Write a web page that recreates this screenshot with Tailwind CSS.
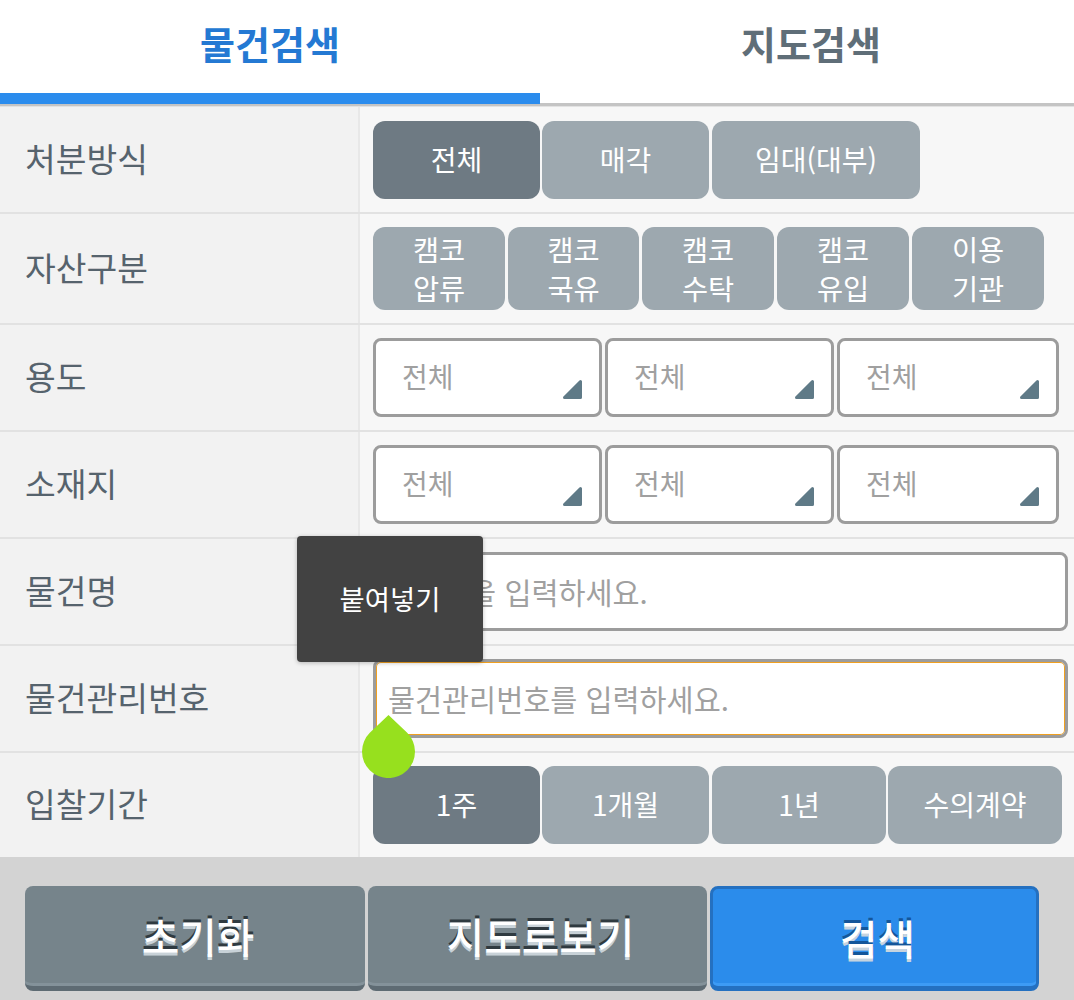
<!DOCTYPE html>
<html lang="ko">
<head>
<meta charset="UTF-8">
<meta name="viewport" content="width=device-width, initial-scale=1.0">
<title>물건검색</title>
<script src="https://cdn.jsdelivr.net/npm/@tailwindcss/browser@4"></script>
</head>
<body class="bg-[#d3d3d3] font-['Noto_Sans_CJK_KR','Noto_Sans',sans-serif] overflow-hidden">
<div class="relative w-[1074px] h-[1000px]">

  <!-- Tabs -->
  <div class="flex h-[106px] bg-white border-b-[3px] border-[#c4c4c4]">
    <div class="w-[540px] h-[104px] border-b-[11px] border-[#2b8ced] pb-[8px] flex items-center justify-center text-[38px] font-bold text-[#2479d3]">물건검색</div>
    <div class="flex-1 h-[103px] pb-[19px] pl-[8px] flex items-center justify-center text-[38px] font-bold text-[#5f6e78]">지도검색</div>
  </div>

  <!-- 처분방식 -->
  <div class="flex h-[108px] bg-[#f7f7f7] border-t border-b-2 border-[#e2e2e2]">
    <div class="w-[360px] bg-[#f2f2f2] border-r-2 border-[#e8e8e8] pl-[25px] pb-[3px] flex items-center text-[33.4px] text-[#56636d]">처분방식</div>
    <div class="flex pl-[13px] pt-[14px] gap-[2px] text-[28px] text-white">
      <div class="w-[167px] h-[78px] pb-[3px] rounded-[12px] bg-[#6e7a83] flex items-center justify-center">전체</div>
      <div class="w-[167px] h-[78px] pb-[3px] rounded-[12px] bg-[#9da8af] flex items-center justify-center">매각</div>
      <div class="w-[208px] h-[78px] pb-[3px] ml-px rounded-[12px] bg-[#9da8af] flex items-center justify-center">임대(대부)</div>
    </div>
  </div>

  <!-- 자산구분 -->
  <div class="flex h-[111px] bg-[#f7f7f7] border-b-2 border-[#e2e2e2]">
    <div class="w-[360px] bg-[#f2f2f2] border-r-2 border-[#e8e8e8] pl-[25px] pb-[3px] flex items-center text-[33.4px] text-[#56636d]">자산구분</div>
    <div class="flex pl-[13px] pt-[13px] gap-[3px] text-[28.4px] leading-[39px] text-white text-center">
      <div class="w-[132px] h-[83px] pb-px rounded-[12px] bg-[#9da8af] flex items-center justify-center">캠코<br>압류</div>
      <div class="w-[131px] h-[83px] pb-px rounded-[12px] bg-[#9da8af] flex items-center justify-center">캠코<br>국유</div>
      <div class="w-[132px] h-[83px] pb-px rounded-[12px] bg-[#9da8af] flex items-center justify-center">캠코<br>수탁</div>
      <div class="w-[132px] h-[83px] pb-px rounded-[12px] bg-[#9da8af] flex items-center justify-center">캠코<br>유입</div>
      <div class="w-[132px] h-[83px] pb-px rounded-[12px] bg-[#9da8af] flex items-center justify-center">이용<br>기관</div>
    </div>
  </div>

  <!-- 용도 -->
  <div class="flex h-[107px] bg-[#f7f7f7] border-b-2 border-[#e2e2e2]">
    <div class="w-[360px] bg-[#f2f2f2] border-r-2 border-[#e8e8e8] pl-[25px] pb-[3px] flex items-center text-[33.4px] text-[#56636d]">용도</div>
    <div class="flex pl-[13px] pt-[13px] gap-[3px] text-[28px] text-[#a0a0a0]">
      <div class="relative w-[229px] h-[79px] rounded-[8px] border-[3px] border-[#9c9c9c] bg-white pl-[26px] pb-[3px] flex items-center">전체
        <svg class="absolute right-[16px] bottom-[14px]" width="21" height="21" viewBox="0 0 21 21"><path d="M18.5 2.5 V18.5 H2.5 Z" fill="#5f7a87" stroke="#5f7a87" stroke-width="3" stroke-linejoin="round"/></svg>
      </div>
      <div class="relative w-[229px] h-[79px] rounded-[8px] border-[3px] border-[#9c9c9c] bg-white pl-[26px] pb-[3px] flex items-center">전체
        <svg class="absolute right-[16px] bottom-[14px]" width="21" height="21" viewBox="0 0 21 21"><path d="M18.5 2.5 V18.5 H2.5 Z" fill="#5f7a87" stroke="#5f7a87" stroke-width="3" stroke-linejoin="round"/></svg>
      </div>
      <div class="relative w-[222px] h-[79px] rounded-[8px] border-[3px] border-[#9c9c9c] bg-white pl-[26px] pb-[3px] flex items-center">전체
        <svg class="absolute right-[16px] bottom-[14px]" width="21" height="21" viewBox="0 0 21 21"><path d="M18.5 2.5 V18.5 H2.5 Z" fill="#5f7a87" stroke="#5f7a87" stroke-width="3" stroke-linejoin="round"/></svg>
      </div>
    </div>
  </div>

  <!-- 소재지 -->
  <div class="flex h-[107px] bg-[#f7f7f7] border-b-2 border-[#e2e2e2]">
    <div class="w-[360px] bg-[#f2f2f2] border-r-2 border-[#e8e8e8] pl-[25px] pb-[3px] flex items-center text-[33.4px] text-[#56636d]">소재지</div>
    <div class="flex pl-[13px] pt-[13px] gap-[3px] text-[28px] text-[#a0a0a0]">
      <div class="relative w-[229px] h-[79px] rounded-[8px] border-[3px] border-[#9c9c9c] bg-white pl-[26px] pb-[3px] flex items-center">전체
        <svg class="absolute right-[16px] bottom-[14px]" width="21" height="21" viewBox="0 0 21 21"><path d="M18.5 2.5 V18.5 H2.5 Z" fill="#5f7a87" stroke="#5f7a87" stroke-width="3" stroke-linejoin="round"/></svg>
      </div>
      <div class="relative w-[229px] h-[79px] rounded-[8px] border-[3px] border-[#9c9c9c] bg-white pl-[26px] pb-[3px] flex items-center">전체
        <svg class="absolute right-[16px] bottom-[14px]" width="21" height="21" viewBox="0 0 21 21"><path d="M18.5 2.5 V18.5 H2.5 Z" fill="#5f7a87" stroke="#5f7a87" stroke-width="3" stroke-linejoin="round"/></svg>
      </div>
      <div class="relative w-[222px] h-[79px] rounded-[8px] border-[3px] border-[#9c9c9c] bg-white pl-[26px] pb-[3px] flex items-center">전체
        <svg class="absolute right-[16px] bottom-[14px]" width="21" height="21" viewBox="0 0 21 21"><path d="M18.5 2.5 V18.5 H2.5 Z" fill="#5f7a87" stroke="#5f7a87" stroke-width="3" stroke-linejoin="round"/></svg>
      </div>
    </div>
  </div>

  <!-- 물건명 -->
  <div class="flex h-[107px] bg-[#f7f7f7] border-b-2 border-[#e2e2e2]">
    <div class="w-[360px] bg-[#f2f2f2] border-r-2 border-[#e8e8e8] pl-[25px] pb-[3px] flex items-center text-[33.4px] text-[#56636d]">물건명</div>
    <div class="pl-[13px] pt-[13px] text-[29.4px] text-[#a0a0a0]">
      <div class="w-[695px] h-[79px] rounded-[8px] border-[3px] border-[#9c9c9c] bg-white pl-[12px] flex items-center">물건명을 입력하세요.</div>
    </div>
  </div>

  <!-- 물건관리번호 -->
  <div class="flex h-[107px] bg-[#f7f7f7] border-b-2 border-[#e2e2e2]">
    <div class="w-[360px] bg-[#f2f2f2] border-r-2 border-[#e8e8e8] pl-[25px] pb-[3px] flex items-center text-[33.4px] text-[#56636d]">물건관리번호</div>
    <div class="pl-[13px] pt-[13px] text-[29.4px] text-[#a0a0a0]">
      <div class="w-[695px] h-[79px] rounded-[8px] border-[3px] border-[#9c9c9c] bg-white shadow-[inset_0_0_0_1px_#f0a020] pl-[12px] flex items-center">물건관리번호를 입력하세요.</div>
    </div>
  </div>

  <!-- 입찰기간 -->
  <div class="flex h-[104px] bg-[#f7f7f7]">
    <div class="w-[360px] bg-[#f2f2f2] border-r-2 border-[#e8e8e8] pl-[25px] pb-[3px] flex items-center text-[33.4px] text-[#56636d]">입찰기간</div>
    <div class="flex pl-[13px] pt-[13px] gap-[2px] text-[28px] text-white">
      <div class="w-[167px] h-[78px] pb-[2px] rounded-[12px] bg-[#6e7a83] flex items-center justify-center">1주</div>
      <div class="w-[167px] h-[78px] pb-[2px] rounded-[12px] bg-[#9da8af] flex items-center justify-center">1개월</div>
      <div class="w-[174px] h-[78px] pb-[2px] ml-px rounded-[12px] bg-[#9da8af] flex items-center justify-center">1년</div>
      <div class="w-[174px] h-[78px] pb-[2px] rounded-[12px] bg-[#9da8af] flex items-center justify-center">수의계약</div>
    </div>
  </div>

  <!-- Bottom buttons -->
  <div class="flex pl-[25px] pt-[29px] gap-[3px] text-[40.8px] font-medium text-white">
    <div class="w-[340px] h-[105px] pl-[6px] rounded-[8px] bg-[#76848b] border-b-[5px] border-[#5e6b73] shadow-[inset_0_-3px_0_#84929a] flex items-center justify-center [text-shadow:0_-3px_0_#2f3a40,0_3px_0_#c8d2d8]">초기화</div>
    <div class="w-[339px] h-[105px] pl-[6px] rounded-[8px] bg-[#76848b] border-b-[5px] border-[#5e6b73] shadow-[inset_0_-3px_0_#84929a] flex items-center justify-center [text-shadow:0_-3px_0_#2f3a40,0_3px_0_#c8d2d8]">지도로보기</div>
    <div class="w-[329px] h-[105px] pl-[6px] rounded-[8px] bg-[#2b8ceb] border-[3px] border-b-[5px] border-[#2470c0] shadow-[inset_0_-3px_0_#3d9bf5] flex items-center justify-center [text-shadow:0_-3px_0_#14569a,0_3px_0_#c6d4df]">검색</div>
  </div>

  <!-- Paste tooltip -->
  <div class="absolute left-[297px] top-[536px] w-[186px] h-[126px] rounded-[4px] bg-[#424242] shadow-[0_1px_4px_rgba(0,0,0,0.25)] flex items-center justify-center text-[27.4px] text-white">붙여넣기</div>

  <!-- Text selection handle -->
  <svg class="absolute left-[362px] top-[715px]" width="53" height="63" viewBox="0 0 53 63"><path d="M26.5 0 L45.2 17.8 A26.5 26.5 0 1 1 7.8 17.8 Z" fill="#97e01e"/></svg>
</div>
</body>
</html>
